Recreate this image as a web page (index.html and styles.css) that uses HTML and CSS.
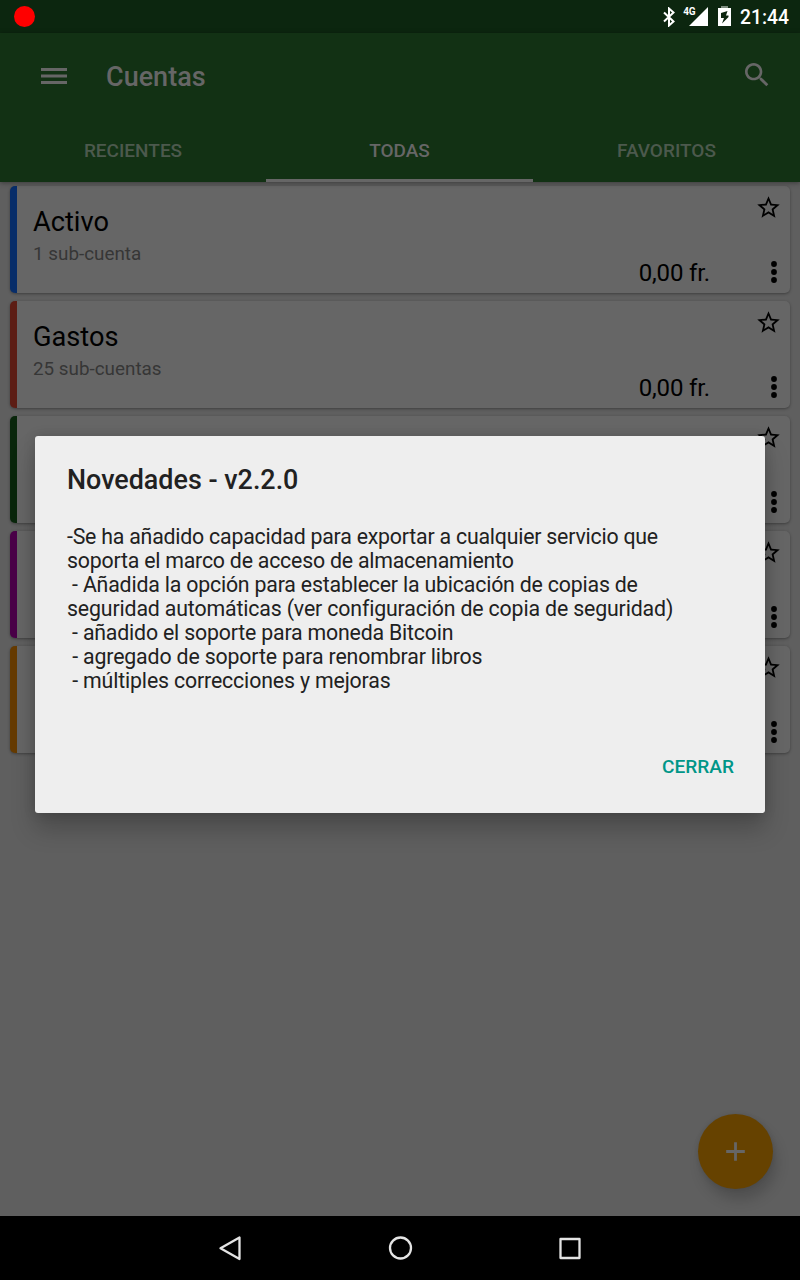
FILE: index.html
```html
<!DOCTYPE html>
<html lang="es">
<head>
<meta charset="utf-8">
<title>Cuentas</title>
<link rel="stylesheet" href="styles.css">
</head>
<body>
<svg class="defs" width="0" height="0">
  <symbol id="star" viewBox="0 0 24 24"><path d="M22 9.24l-7.19-.62L12 2 9.19 8.63 2 9.24l5.46 4.73L5.82 21 12 17.27 18.18 21l-1.63-7.03L22 9.24zM12 15.4l-3.76 2.27 1-4.28-3.32-2.88 4.38-.38L12 6.1l1.71 4.04 4.38.38-3.32 2.88 1 4.28L12 15.4z"/></symbol>
  <symbol id="more" viewBox="0 0 6 22"><circle cx="3" cy="3" r="2.9"/><circle cx="3" cy="11" r="2.9"/><circle cx="3" cy="19" r="2.9"/></symbol>
</svg>
<div class="screen">
  <header class="status">
    <span class="record"></span>
    <div class="status-icons">
      <svg class="bluetooth" width="12" height="20" viewBox="0 0 12 20"><path d="M1 5.5L10.5 14.5L6 18.5V1.5L10.5 5.5L1 14.5" fill="none" stroke="#fff" stroke-width="2"/></svg>
      <span class="network">4G</span>
      <svg class="signal" width="19" height="19" viewBox="0 0 19 19"><path d="M0 19L19 0V19z" fill="#fff"/></svg>
      <svg class="battery" width="13" height="20" viewBox="0 0 13 20"><path d="M3 0h7v3H3z" fill="#7f8d80"/><path d="M0 2h13v18H0z" fill="#fff"/><path d="M9.5 5L3 7v5h3l-2 5.5L10.5 11V9.5H8z" fill="#0c260f"/></svg>
      <span class="clock">21:44</span>
    </div>
  </header>
  <div class="appbar">
    <div class="toolbar">
      <svg class="menu" width="26" height="18" viewBox="0 0 26 18"><path d="M0 2.5h26M0 9h26M0 15.5h26" stroke="#666" stroke-width="2.8"/></svg>
      <h1 class="heading">Cuentas</h1>
      <svg class="search" width="32" height="32" viewBox="0 0 24 24"><path fill="#666" d="M15.5 14h-.79l-.28-.27C15.41 12.59 16 11.11 16 9.5 16 5.91 13.09 3 9.5 3S3 5.91 3 9.5 5.91 16 9.5 16c1.61 0 3.09-.59 4.23-1.57l.27.28v.79l5 4.99L20.49 19l-4.99-5zm-6 0C7.01 14 5 11.99 5 9.5S7.01 5 9.5 5 14 7.01 14 9.5 11.99 14 9.5 14z"/></svg>
    </div>
    <nav class="tabs">
      <span class="tab">RECIENTES</span>
      <span class="tab active">TODAS</span>
      <span class="tab">FAVORITOS</span>
    </nav>
  </div>
  <main class="list">
    <article class="card blue">
      <div class="info"><h2 class="name">Activo</h2><p class="sub">1 sub-cuenta</p></div>
      <span class="amount">0,00 fr.</span>
      <div class="actions"><svg class="star"><use href="#star"/></svg><svg class="more"><use href="#more"/></svg></div>
    </article>
    <article class="card red">
      <div class="info"><h2 class="name">Gastos</h2><p class="sub">25 sub-cuentas</p></div>
      <span class="amount">0,00 fr.</span>
      <div class="actions"><svg class="star"><use href="#star"/></svg><svg class="more"><use href="#more"/></svg></div>
    </article>
    <article class="card green">
      <div class="actions"><svg class="star"><use href="#star"/></svg><svg class="more"><use href="#more"/></svg></div>
    </article>
    <article class="card purple">
      <div class="actions"><svg class="star"><use href="#star"/></svg><svg class="more"><use href="#more"/></svg></div>
    </article>
    <article class="card orange">
      <div class="actions"><svg class="star"><use href="#star"/></svg><svg class="more"><use href="#more"/></svg></div>
    </article>
  </main>
  <footer class="navbar">
    <svg width="32" height="32" viewBox="0 0 32 32"><path d="M6.5 16.3L25.5 5.5V27z"/></svg>
    <svg width="32" height="32" viewBox="0 0 32 32"><circle cx="16.5" cy="16" r="10.5"/></svg>
    <svg width="32" height="32" viewBox="0 0 32 32"><rect x="6.5" y="7" width="19" height="19"/></svg>
  </footer>
  <button class="fab"><svg width="20" height="20" viewBox="0 0 20 20"><path d="M9.5 .2v18.6M.2 9.5h18.6" stroke="#666" stroke-width="2.8"/></svg></button>
  <section class="dialog">
    <h2 class="dialog-title">Novedades - v2.2.0</h2>
    <p class="dialog-body"><span class="line tight">-Se ha añadido capacidad para exportar a cualquier servicio que</span><span class="line tight">soporta el marco de acceso de almacenamiento</span><span class="line snug"> - Añadida la opción para establecer la ubicación de copias de</span><span class="line">seguridad automáticas (ver configuración de copia de seguridad)</span><span class="line snug"> - añadido el soporte para moneda Bitcoin</span><span class="line"> - agregado de soporte para renombrar libros</span><span class="line"> - múltiples correcciones y mejoras</span></p>
    <button class="close">CERRAR</button>
  </section>
</div>
</body>
</html>
```
FILE: styles.css
```css
* { box-sizing: border-box; }
body { margin: 0; font-family: Roboto, sans-serif; }
h1, h2, p { margin: 0; }
button { border: 0; padding: 0; font-family: inherit; }
.defs { display: block; }
.screen { position: relative; width: 800px; height: 1280px; display: flex; flex-direction: column; overflow: hidden; background: #5f5f5f; }
.status { height: 33px; background: #0c260f; display: flex; align-items: center; justify-content: space-between; padding: 0 11px 0 13.5px; }
.record { width: 21px; height: 21px; border-radius: 50%; background: #f00; }
.status-icons { display: flex; align-items: center; color: #fff; }
.network { font-size: 10px; font-weight: 700; line-height: 10px; margin: -9px -6px 0 8px; letter-spacing: -.4px; }
.battery { margin: -1px 9px 0 10px; }
.clock { font-size: 19.3px; font-weight: 500; line-height: 33px; padding-top: 1px; }
.appbar { height: 149px; background: #123114; box-shadow: 0 1px 5px rgba(0,0,0,.4); display: flex; flex-direction: column; z-index: 1; }
.toolbar { height: 85px; display: flex; align-items: center; padding: 0 27px 0 41px; }
.heading { margin-left: 39px; flex: 1; font-size: 27px; font-weight: 500; color: #666; padding-top: 2px; }
.search { margin-bottom: 1px; }
.tabs { flex: 1; display: grid; grid-template-columns: 266px 267px 267px; }
.tab { display: flex; align-items: center; justify-content: center; font-size: 19px; font-weight: 500; color: #4c594d; }
.active { color: #666; border-bottom: 3px solid #666; padding-top: 3px; }
.list { flex: 1; padding: 4px 10px; display: flex; flex-direction: column; gap: 8px; }
.card { height: 107px; background: #666; border-left: 7px solid; border-radius: 5px; box-shadow: 0 1px 3px rgba(0,0,0,.35); display: flex; }
.blue { border-color: #072d69; }
.red { border-color: #5c1d14; }
.green { border-color: #09260b; }
.purple { border-color: #4a0048; }
.orange { border-color: #663b00; }
.info { flex: 1; padding: 20px 0 0 16px; }
.name { font-size: 27.2px; line-height: 32px; font-weight: 400; color: #000; }
.sub { font-size: 18.85px; line-height: 22px; color: #363636; margin-top: 5px; }
.amount { align-self: flex-end; font-size: 24px; line-height: 28px; letter-spacing: -.15px; margin: 0 47px 6px 0; }
.actions { width: 33px; margin-left: auto; display: flex; flex-direction: column; justify-content: space-between; padding: 8px 11px 10px 0; align-items: flex-end; }
.star { width: 27px; height: 27px; margin-right: -3px; }
.more { width: 6px; height: 22px; margin-right: 2px; }
.navbar { height: 64px; background: #000; display: flex; align-items: center; justify-content: center; gap: 138px; }
.navbar svg { fill: none; stroke: #e4e4e4; stroke-width: 2.3; stroke-linejoin: round; }
.fab { position: absolute; left: 698px; top: 1114px; width: 75px; height: 75px; border-radius: 50%; background: #664200; display: flex; align-items: center; justify-content: center; box-shadow: 4px 11px 13px rgba(0,0,0,.17), 0 0 5px rgba(0,0,0,.1); }
.dialog { position: absolute; z-index: 2; left: 35px; top: 436px; width: 730px; height: 377px; border-radius: 3px; background: #eee; color: #212121; padding: 28px 31px 30px 32px; display: flex; flex-direction: column; box-shadow: 0 16px 24px rgba(0,0,0,.22), 0 0 12px rgba(0,0,0,.15); }
.dialog-title { font-size: 26.9px; line-height: 32px; font-weight: 500; }
.dialog-body { margin-top: 29px; font-size: 21.3px; line-height: 24px; white-space: pre; }
.line { display: block; letter-spacing: -.145px; }
.snug { letter-spacing: -.185px; }
.tight { letter-spacing: -.21px; }
.close { align-self: flex-end; margin-top: auto; background: none; color: #009688; font-size: 19.1px; font-weight: 500; line-height: 32px; }
```
